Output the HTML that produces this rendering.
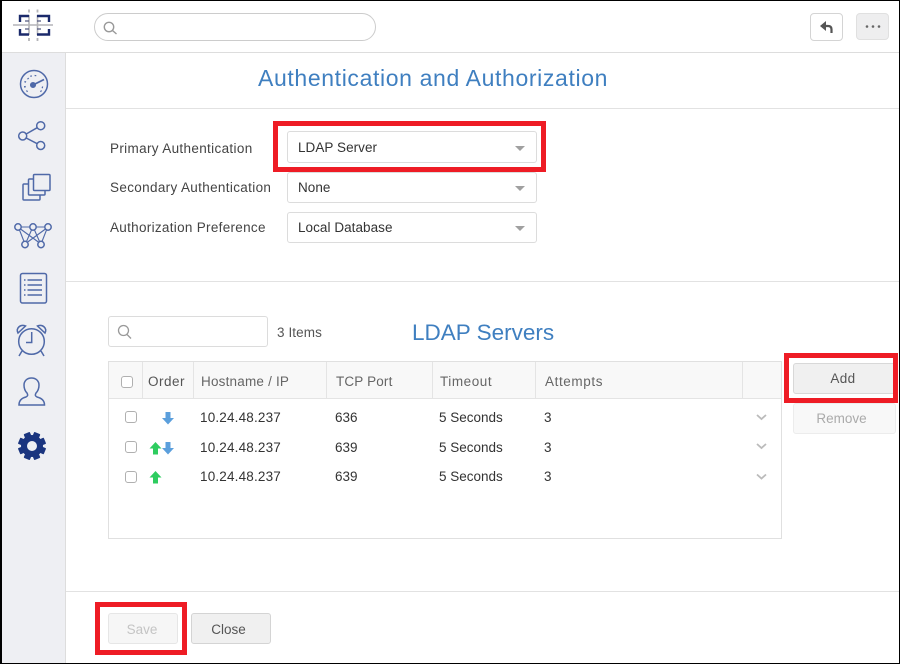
<!DOCTYPE html>
<html><head><meta charset="utf-8">
<style>
html,body{margin:0;padding:0;background:#fff}
#p{position:relative;width:900px;height:664px;overflow:hidden;background:#fff;font-family:"Liberation Sans",sans-serif;color:#444;font-size:13.5px}
#p div,#p span.a{position:absolute;box-sizing:border-box}
.t{white-space:nowrap;line-height:16px}
.sel{left:287px;width:250px;height:31px;border:1px solid #dcdcdc;border-radius:3px;background:#fff}
.sel .t{left:10px;top:7px;color:#333;letter-spacing:.05px}
.car{left:227px;top:13px;width:0;height:0;border-left:5px solid transparent;border-right:5px solid transparent;border-top:5px solid #a0a0a0}
.red{border:5px solid #ee1c25}
.hd{top:362px;height:37px;width:1px;background:#e4e4e4}
.th{top:374px;color:#666}
.cb{width:12px;height:12px;border:1px solid #b0b0b0;border-radius:3px;background:#fff}
.td{color:#333}
.ip{letter-spacing:.18px}
.lab{letter-spacing:.34px;color:#444}
svg{position:absolute;overflow:visible}
</style></head><body><div id="p">
<div style="left:0;top:53px;width:66px;height:611px;background:#eeeff3;border-right:1px solid #ddd"></div>
<div style="left:0;top:52px;width:900px;height:1px;background:#ddd"></div>
<div style="left:66px;top:108px;width:834px;height:1px;background:#e2e2e2"></div>
<div style="left:66px;top:281px;width:834px;height:1px;background:#e2e2e2"></div>
<div style="left:66px;top:591px;width:834px;height:1px;background:#e2e2e2"></div>

<svg style="left:0;top:0" width="66" height="52" fill="none">
<path d="M13 25H53M29 15V35M37.500 15V35" stroke="#b4b4b8" stroke-width="1.600"/>
<path d="M20 22v-6h9M37 16h12v6M20 29v5.500h9M37 34.500h12V29" stroke="#1b2a6b" stroke-width="2.400"/>
<path d="M25 21h4M37 21h4M25 29h4M37 29h4" stroke="#555a80" stroke-width="1.300"/>
<path d="M29 9.500v3M37.500 9.500v3M29 38v3M37.500 38v3" stroke="#b4b4b8" stroke-width="1.800"/>
</svg>

<div style="left:94px;top:13px;width:282px;height:28px;border:1px solid #ccc;border-radius:14px;background:#fff"></div>
<svg style="left:104px;top:20px" width="16" height="16" fill="none" stroke="#999" stroke-width="1.400"><circle cx="5" cy="7" r="4.700"/><path d="M8.500 10.500l4 3.500"/></svg>

<div style="left:810px;top:13px;width:33px;height:28px;border:1px solid #d4d4d4;border-radius:4px;background:#fff"></div>
<svg style="left:810px;top:13px" width="33" height="28" fill="none"><path d="M16 8l-6 5 6 5z" fill="#555"/><path d="M14 13h4c2.500 0 3.500 1.500 3.500 3.500V20" stroke="#555" stroke-width="2.200"/></svg>
<div style="left:856px;top:13px;width:33px;height:27px;border:1px solid #e0e0e0;border-radius:4px;background:#eeeeef"></div>
<svg style="left:856px;top:13px" width="34" height="27" fill="#666"><circle cx="11" cy="13.500" r="1.300"/><circle cx="17" cy="13.500" r="1.300"/><circle cx="23" cy="13.500" r="1.300"/></svg>

<svg style="left:0;top:53px" width="66" height="420" fill="none" stroke="#4f69a8" stroke-width="1.500">
<circle cx="34" cy="31" r="13.500"/>
<path d="M33 32l11-5.500" stroke-width="1.800"/><circle cx="33" cy="32" r="2.300" fill="#4f69a8"/>
<path d="M25 34.500l-.2-1.500M25 29.500l.5-1.300M27.700 25.200l.8.8M31 22.500l.2 1.200M35.500 22l-.1 1.200M43 34.500l-1.200-.3M26.500 38.500l1-.7M41.500 38.500l-1-.7" stroke-width="1.700"/>
<circle cx="40.700" cy="72.700" r="4"/><circle cx="22.700" cy="83" r="4"/><circle cx="40.700" cy="92.500" r="4"/>
<path d="M26.200 81l11-6.300M26.200 85l11 5.700"/>
<rect x="33.500" y="121.500" width="16.500" height="16" rx="1"/>
<path d="M33.500 126h-4a1 1 0 0 0-1 1v14a1 1 0 0 0 1 1h14.500a1 1 0 0 0 1-1v-3.500"/>
<path d="M28.500 131H24a1 1 0 0 0-1 1v14a1 1 0 0 0 1 1h15a1 1 0 0 0 1-1v-4"/>
<circle cx="18" cy="174" r="3.200"/><circle cx="33" cy="174" r="3.200"/><circle cx="48" cy="174" r="3.200"/><circle cx="25" cy="191.500" r="3.200"/><circle cx="41" cy="191.500" r="3.200"/>
<path d="M21 174h9M36 174h9M19.500 177l4.500 11.500M20.500 176l18.500 13.500M31.500 177l-5 11.500M34.500 177l5 11.500M45.500 176l-18.500 13.500M46.500 177l-4.500 11.500" stroke-width="1.100"/>
<rect x="20.500" y="220.500" width="26" height="29.500" rx="2"/>
<path d="M27.500 227h14.500M27.500 232h14.500M27.500 237h14.500M27.500 242h14.500" stroke-width="1.600"/>
<path d="M24 227h1.500M24 232h1.500M24 237h1.500M24 242h1.500" stroke-width="1.600"/>
<circle cx="31.500" cy="288.500" r="12.800"/>
<path d="M31.700 279v10.500H26" stroke-width="1.500"/>
<path d="M18 280c-2.500-5 2.500-9 7.500-7zM45 280c2.500-5-2.500-9-7.500-7zM22 298l-3 5M41 298l3 5"/>
<path d="M19 352c0-5 3-7 7-8 2-1 2-2 1-4-2-2-3-5-3-8 0-4 3-7 7.500-7s7.500 3 7.500 7c0 3-1 6-3 8-1 2-1 3 1 4 4 1 7.500 3 7.500 8z"/>
</svg>

<svg style="left:17px;top:431px" width="30" height="30" fill="#1a357f">
<g transform="translate(15 15)">
<circle r="8" fill="none" stroke="#1a357f" stroke-width="6"/>
<rect x="-3.300" y="-14" width="6.600" height="5" rx=".8" transform="rotate(22.500)"/>
<rect x="-3.300" y="-14" width="6.600" height="5" rx=".8" transform="rotate(67.500)"/>
<rect x="-3.300" y="-14" width="6.600" height="5" rx=".8" transform="rotate(112.500)"/>
<rect x="-3.300" y="-14" width="6.600" height="5" rx=".8" transform="rotate(157.500)"/>
<rect x="-3.300" y="-14" width="6.600" height="5" rx=".8" transform="rotate(202.500)"/>
<rect x="-3.300" y="-14" width="6.600" height="5" rx=".8" transform="rotate(247.500)"/>
<rect x="-3.300" y="-14" width="6.600" height="5" rx=".8" transform="rotate(292.500)"/>
<rect x="-3.300" y="-14" width="6.600" height="5" rx=".8" transform="rotate(337.500)"/>
</g></svg>

<div class="t" style="left:258px;top:63px;font-size:23px;line-height:30px;letter-spacing:.63px;color:#3f7fc0">Authentication and Authorization</div>

<div class="t lab" style="left:110px;top:141px">Primary Authentication</div>
<div class="t lab" style="left:110px;top:180px">Secondary Authentication</div>
<div class="t lab" style="left:110px;top:220px;letter-spacing:.3px">Authorization Preference</div>

<div class="sel" style="top:131px;height:32px"><div class="t" style="top:8px">LDAP Server</div><div class="car" style="top:14px"></div></div>
<div class="sel" style="top:172px"><div class="t">None</div><div class="car"></div></div>
<div class="sel" style="top:212px"><div class="t">Local Database</div><div class="car"></div></div>
<div class="red" style="left:273px;top:121px;width:273px;height:51px"></div>

<div style="left:108px;top:316px;width:160px;height:31px;border:1px solid #dcdcdc;border-radius:3px;background:#fff"></div>
<svg style="left:117px;top:324px" width="16" height="16" fill="none" stroke="#999" stroke-width="1.300"><circle cx="6.500" cy="6.500" r="5"/><path d="M10 10.500l4 4"/></svg>
<div class="t" style="left:277px;top:325px;color:#555;letter-spacing:.1px">3 Items</div>
<div class="t" style="left:412px;top:318px;font-size:22.500px;line-height:30px;color:#3f7fc0">LDAP Servers</div>

<div style="left:108px;top:361px;width:674px;height:178px;border:1px solid #e0e0e0;background:#fff"></div>
<div style="left:109px;top:362px;width:672px;height:37px;background:#f8f8f8;border-bottom:1px solid #e4e4e4"></div>
<div class="hd" style="left:142px"></div><div class="hd" style="left:193px"></div><div class="hd" style="left:326px"></div><div class="hd" style="left:432px"></div><div class="hd" style="left:535px"></div><div class="hd" style="left:742px"></div>
<div class="cb" style="left:121px;top:376px"></div>
<div class="t th" style="left:148px;color:#555;letter-spacing:.5px">Order</div>
<div class="t th" style="left:201px;letter-spacing:.2px">Hostname / IP</div>
<div class="t th" style="left:336px;letter-spacing:.15px">TCP Port</div>
<div class="t th" style="left:440px;letter-spacing:.55px">Timeout</div>
<div class="t th" style="left:545px;letter-spacing:.6px">Attempts</div>

<div class="cb" style="left:125px;top:411px"></div>
<div class="cb" style="left:125px;top:441px"></div>
<div class="cb" style="left:125px;top:471px"></div>

<svg style="left:0;top:0" width="900" height="664">
<path d="M165.500 412h5v6h3.500l-6 6.500-6-6.500h3.500z" fill="#5b9fdc"/>
<path d="M165.500 442h5v6h3.500l-6 6.500-6-6.500h3.500z" fill="#5b9fdc"/>
<path d="M153 454.500h5v-6h3.500l-6-6.500-6 6.500h3.500z" fill="#2ecc5f"/>
<path d="M153 483.500h5v-6h3.500l-6-6.500-6 6.500h3.500z" fill="#2ecc5f"/>
<path d="M757 415l4.500 4 4.500-4M757 444l4.500 4 4.500-4M757 474.500l4.500 4 4.500-4" fill="none" stroke="#bbb" stroke-width="1.800"/>
</svg>

<div class="t td ip" style="left:200px;top:410px">10.24.48.237</div><div class="t td" style="left:335px;top:410px">636</div><div class="t td" style="left:439px;top:410px">5 Seconds</div><div class="t td" style="left:544px;top:410px">3</div>
<div class="t td ip" style="left:200px;top:440px">10.24.48.237</div><div class="t td" style="left:335px;top:440px">639</div><div class="t td" style="left:439px;top:440px">5 Seconds</div><div class="t td" style="left:544px;top:440px">3</div>
<div class="t td ip" style="left:200px;top:469px">10.24.48.237</div><div class="t td" style="left:335px;top:469px">639</div><div class="t td" style="left:439px;top:469px">5 Seconds</div><div class="t td" style="left:544px;top:469px">3</div>

<div style="left:793px;top:363px;width:103px;height:31px;border:1px solid #d8d8d8;border-radius:3px;background:#f0f0f0"></div>
<div class="t" style="left:793px;top:371px;width:100px;text-align:center;color:#555;letter-spacing:.4px">Add</div>
<div style="left:793px;top:403px;width:103px;height:31px;border:1px solid #ececec;border-radius:3px;background:#f8f8f8"></div>
<div class="t" style="left:793px;top:411px;width:97px;text-align:center;color:#aaa">Remove</div>
<div class="red" style="left:784px;top:353px;width:114px;height:50px"></div>

<div style="left:108px;top:613px;width:70px;height:31px;border:1px solid #e6e6e6;border-radius:3px;background:#f6f6f6"></div>
<div class="t" style="left:107px;top:622px;width:70px;text-align:center;color:#c4c4c4">Save</div>
<div class="red" style="left:95px;top:602px;width:92px;height:53px"></div>
<div style="left:191px;top:613px;width:80px;height:31px;border:1px solid #d4d4d4;border-radius:3px;background:#f0f0f0"></div>
<div class="t" style="left:191px;top:622px;width:75px;text-align:center;color:#555">Close</div>

<div style="left:0;top:0;width:900px;height:1px;background:#000"></div>
<div style="left:0;top:0;width:1.500px;height:664px;background:#000"></div>
<div style="left:898.500px;top:0;width:1.500px;height:664px;background:#000"></div>
<div style="left:0;top:662.500px;width:900px;height:1.500px;background:#000"></div>
</div></body></html>
